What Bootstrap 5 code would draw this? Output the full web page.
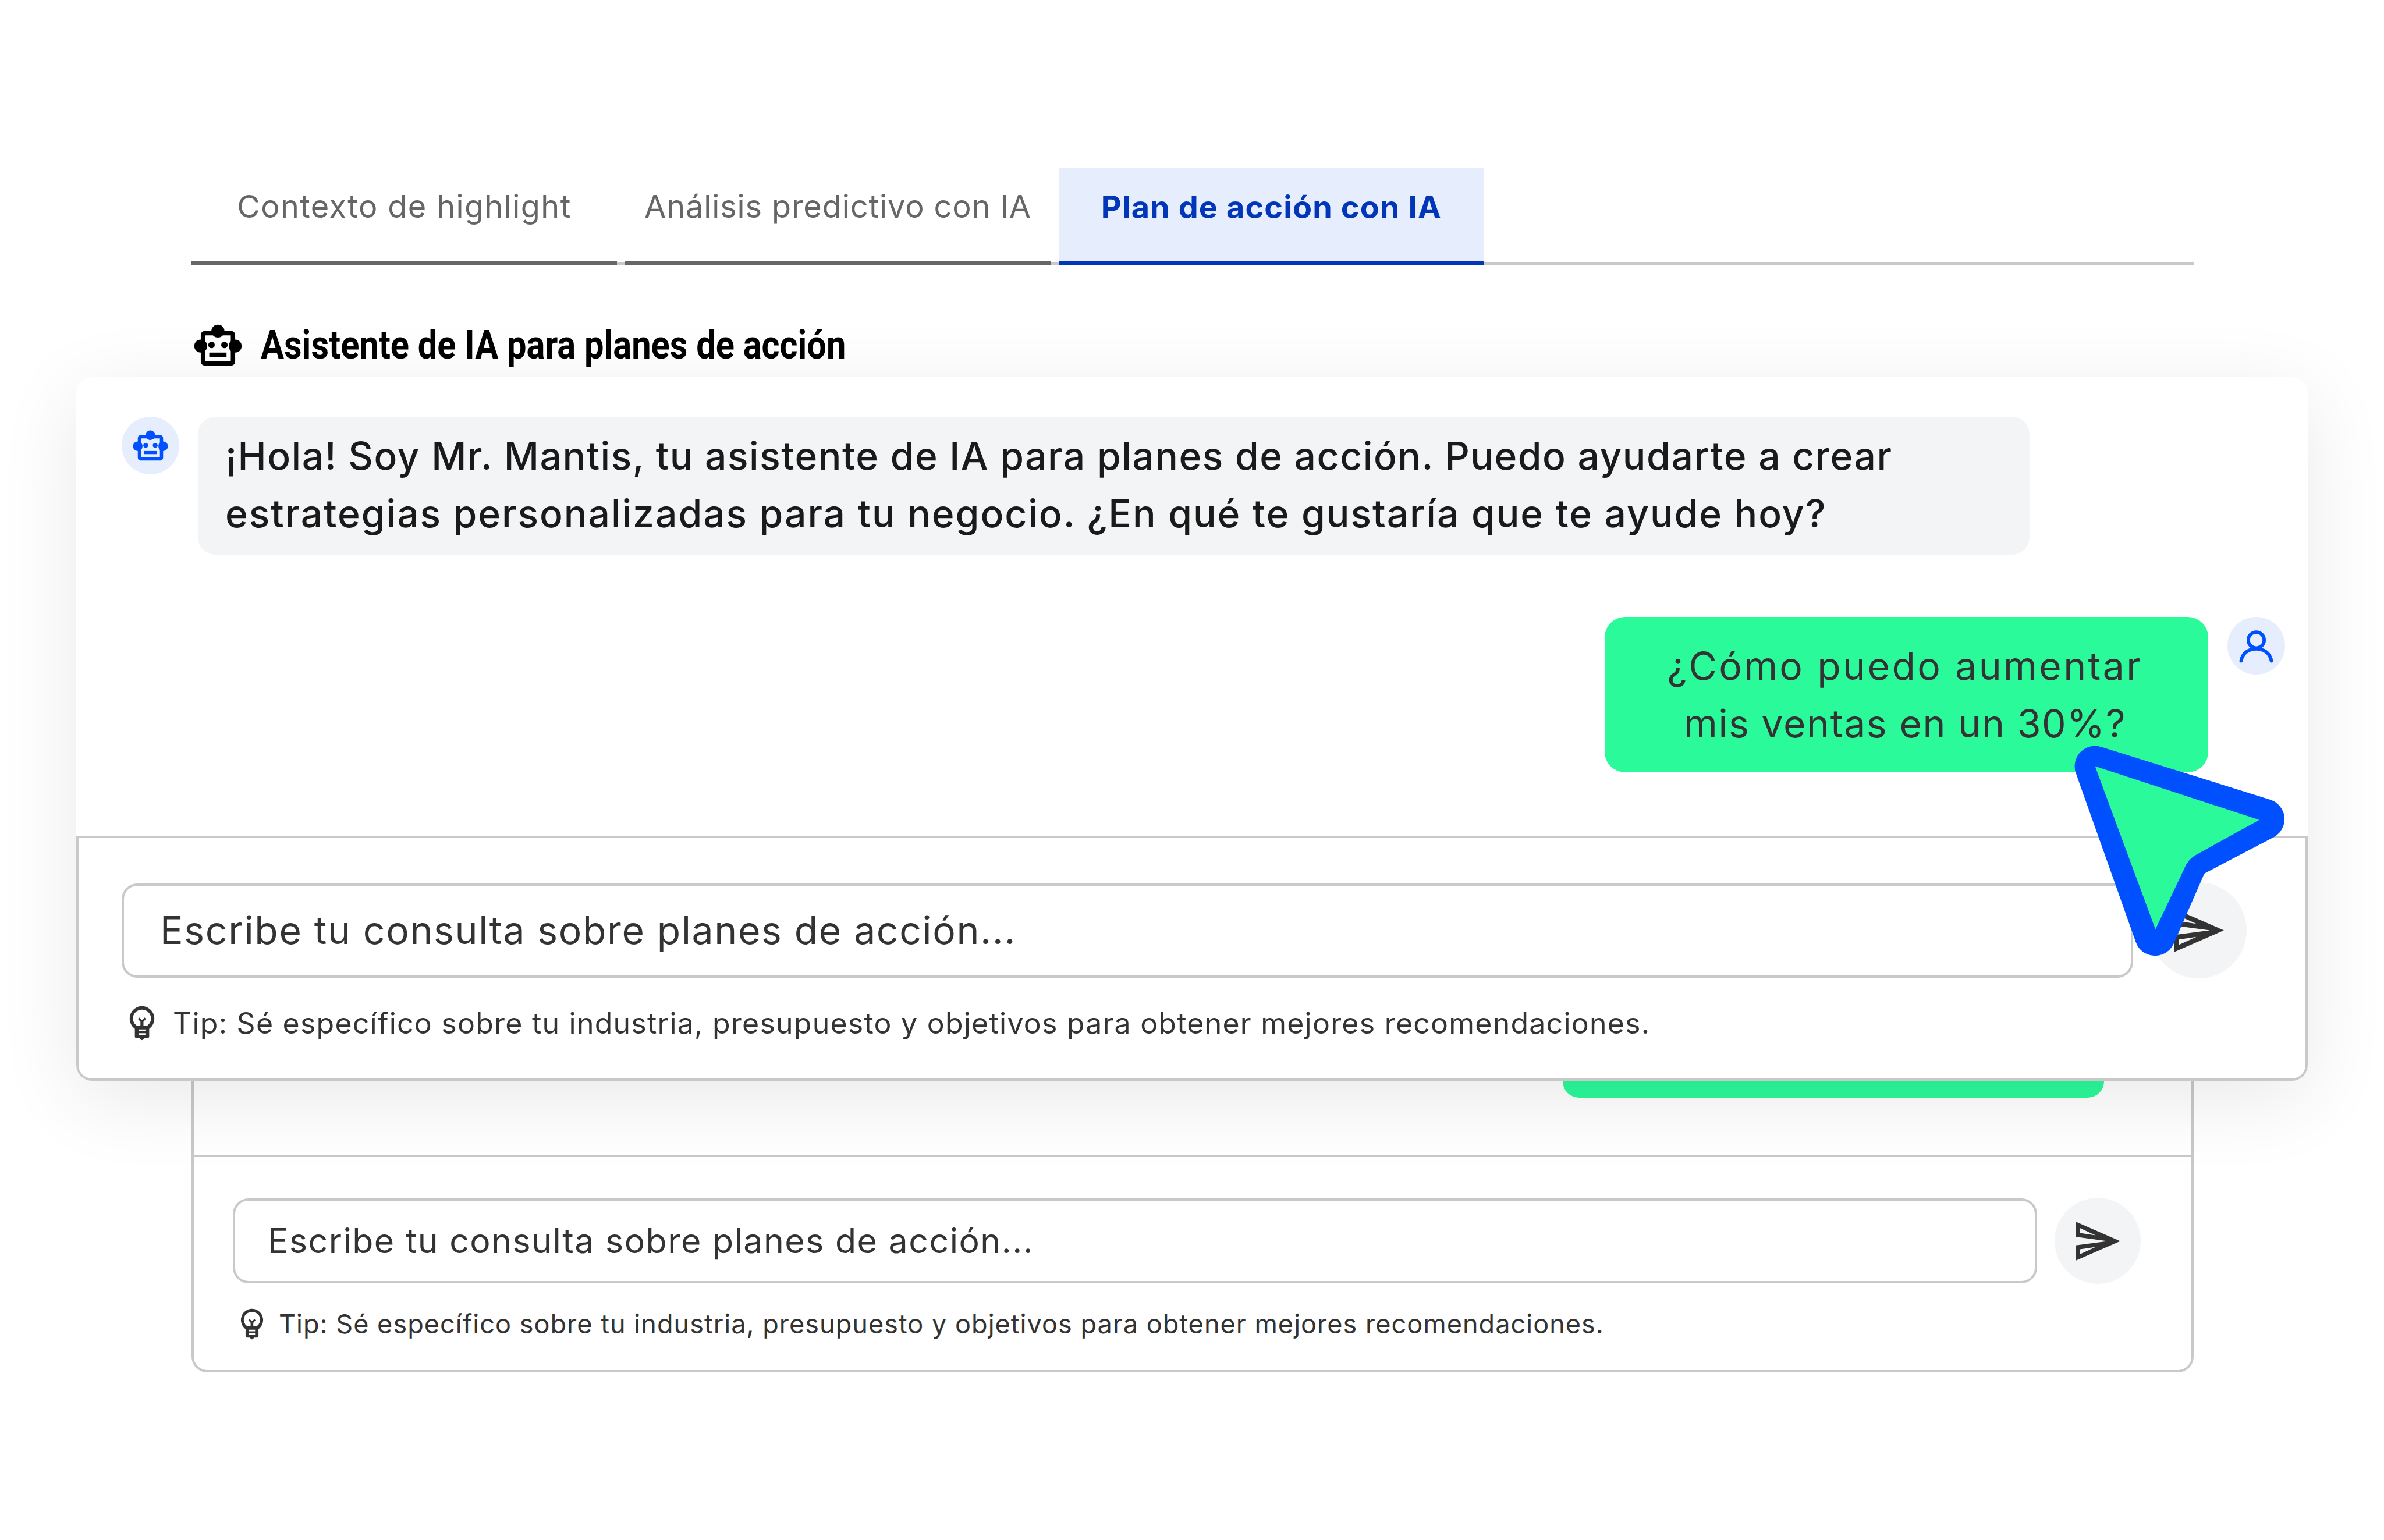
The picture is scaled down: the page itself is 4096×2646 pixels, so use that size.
<!DOCTYPE html>
<html lang="es">
<head>
<meta charset="utf-8">
<title>Asistente de IA</title>
<link href="https://cdn.jsdelivr.net/npm/bootstrap@5.3.0/dist/css/bootstrap.min.css" rel="stylesheet">
<style>
html,body{margin:0;background:#fff;}
body{font-family:Inter,"Open Sans",sans-serif;color:#333;}
.stage{position:relative;width:4096px;height:2646px;overflow:hidden;background:#fff;padding:288px 327px 0 329px;}
.tabrow{border-bottom:4px solid #c9c9c9;height:167px;gap:14px;flex-wrap:nowrap;}
.tabitem{width:731px;height:167px;border-bottom:6px solid #666;margin-bottom:-4px;color:#666;font-size:54px;letter-spacing:1.4px;padding:0 0 28px;background:transparent;border-radius:0;}
.tabitem.is-tight{letter-spacing:.9px;}
.tabitem.is-on{background:#e6edfd;color:#0036b7;font-weight:700;border-bottom-color:#0036b7;letter-spacing:1.1px;padding-bottom:26px;}
.heading-row{height:276px;gap:32px;padding-left:4px;color:#000;}
.robot-lg{width:83px;height:72px;flex:none;}
.heading-txt{font-family:Roboto,"Liberation Sans",sans-serif;font-weight:700;font-size:68px;margin:0;line-height:1;white-space:nowrap;transform:scaleX(.876);transform-origin:left center;}
.backcard{border:4px solid #c9c9c9;border-radius:27px;height:1627px;background:#fff;}
.back-chat{flex:1 1 auto;padding:0 150px 98px 0;}
.back-bubble{width:930px;height:300px;background:#2bfa9a;border-radius:28px;}
.back-foot{border-top:4px solid #c9c9c9;padding:70px 87px 0 67px;height:370px;}
.box{border:4px solid #c9c9c9;border-radius:27px;background:#fff;color:#333;}
.box-back{height:146px;padding:0 56px;font-size:59px;letter-spacing:1.5px;}
.box-front{height:162px;padding:0 62px;font-size:66px;letter-spacing:1.65px;}
.sendbtn{background:#f3f4f6;border:0;padding:0;flex:none;}
.sendbtn-back{width:148px;height:148px;margin-left:30px;}
.sendbtn-back svg{width:77px;height:67px;}
.sendbtn-front{width:165px;height:165px;margin-left:30px;}
.sendbtn-front svg{width:86px;height:75px;}
.tip-back{font-size:45px;letter-spacing:1.03px;margin-top:42px;gap:25px;padding-left:12px;line-height:1.2;}
.tip-back svg{width:42px;height:54px;}
.tip-front{font-size:50px;letter-spacing:1.23px;margin-top:47px;gap:30px;padding-left:12px;line-height:1.2;}
.tip-front svg{width:46px;height:60px;}
.overlay{position:absolute;left:131px;top:648px;width:3834px;height:1209px;background:#fff;border-radius:27px;box-shadow:0 30px 140px rgba(0,0,0,.09);}
.ov-chat{height:788px;padding:68px 39px 0 78px;}
.avatar{width:99px;height:99px;background:#e6edfd;flex:none;}
.avatar .bot{width:61px;height:53px;}
.avatar .usr{width:65px;height:65px;}
.bubble-ai{width:3147px;height:237px;background:#f3f4f6;border-radius:30px;margin-left:32px;padding:0 47px 3px;font-size:66px;line-height:99px;letter-spacing:1.5px;color:#1a1a1a;white-space:nowrap;font-weight:500;}
.ai-line2{letter-spacing:1.95px;}
.row-user{margin-top:107px;}
.bubble-me{width:1037px;height:267px;background:#2bfa9a;border-radius:35px;margin-right:33px;padding-right:5px;font-size:66px;line-height:99px;letter-spacing:1.6px;text-align:center;color:#333;}
.me-line1{letter-spacing:3.4px;}
.ov-foot{height:421px;border:4px solid #c9c9c9;border-radius:0 0 27px 27px;padding:76px 101px 0 74px;}
.cursor-mark{position:absolute;left:3499px;top:1231px;width:467px;height:454px;}
</style>
</head>
<body>
<svg width="0" height="0" class="position-absolute">
  <defs>
    <symbol id="robot" viewBox="70 80 385 335">
      <circle cx="262" cy="135" r="52"/><circle cx="125" cy="255" r="52"/><circle cx="400" cy="255" r="52"/>
      <path fill-rule="evenodd" d="M155 135H370a30 30 0 0 1 30 30V380a30 30 0 0 1-30 30H155a30 30 0 0 1-30-30V165a30 30 0 0 1 30-30ZM160 170V375H365V170Z"/>
      <circle cx="211" cy="246" r="26"/><circle cx="314" cy="246" r="26"/><rect x="193" y="307" width="138" height="34"/>
    </symbol>
    <symbol id="send" viewBox="0 0 118 103">
      <path fill-rule="evenodd" d="M0 0L118 51.5L0 103V62.5L85 51.5L0 40ZM11.5 17V30L53 36ZM11.5 86V73L53 67Z"/>
    </symbol>
    <symbol id="bulb" viewBox="70 80 205 280">
      <path fill-rule="evenodd" d="M172 84a100 100 0 0 1 58 181V325q0 15-15 15H190q-8 16-18 16t-18-16H130q-15 0-15-15V265A100 100 0 0 1 172 84ZM172 112a70 70 0 0 0-42 128H160V208L140 186L150 174L172 196L194 174L204 186L184 208V240H214A70 70 0 0 0 172 112ZM145 270V285H200V270ZM145 300V315H200V300Z"/>
    </symbol>
  </defs>
</svg>
<div class="stage">
  <ul class="nav tabrow">
    <li class="nav-item"><a class="nav-link tabitem d-flex align-items-center justify-content-center" href="#">Contexto de highlight</a></li>
    <li class="nav-item"><a class="nav-link tabitem is-tight d-flex align-items-center justify-content-center" href="#">Análisis predictivo con IA</a></li>
    <li class="nav-item"><a class="nav-link tabitem is-on d-flex align-items-center justify-content-center" href="#">Plan de acción con IA</a></li>
  </ul>
  <div class="heading-row d-flex align-items-center">
    <svg class="robot-lg" fill="#000"><use href="#robot"/></svg>
    <h5 class="heading-txt">Asistente de IA para planes de acción</h5>
  </div>
  <div class="backcard d-flex flex-column">
    <div class="back-chat d-flex justify-content-end align-items-end"><div class="back-bubble"></div></div>
    <div class="back-foot">
      <div class="d-flex align-items-center">
        <div class="box box-back flex-grow-1 d-flex align-items-center">Escribe tu consulta sobre planes de acción...</div>
        <button class="btn sendbtn sendbtn-back rounded-circle d-flex align-items-center justify-content-center" type="button" aria-label="Enviar"><svg fill="#333"><use href="#send"/></svg></button>
      </div>
      <div class="tip-back d-flex align-items-center"><svg fill="#333"><use href="#bulb"/></svg><span>Tip: Sé específico sobre tu industria, presupuesto y objetivos para obtener mejores recomendaciones.</span></div>
    </div>
  </div>

  <div class="overlay d-flex flex-column">
    <div class="ov-chat">
      <div class="d-flex">
        <div class="avatar rounded-circle d-flex align-items-center justify-content-center"><svg class="bot" fill="#0050ff"><use href="#robot"/></svg></div>
        <div class="bubble-ai d-flex align-items-center"><span>¡Hola! Soy Mr. Mantis, tu asistente de IA para planes de acción. Puedo ayudarte a crear<br><span class="ai-line2">estrategias personalizadas para tu negocio. ¿En qué te gustaría que te ayude hoy?</span></span></div>
      </div>
      <div class="d-flex justify-content-end row-user">
        <div class="bubble-me d-flex align-items-center justify-content-center"><span><span class="me-line1">¿Cómo puedo aumentar</span><br>mis ventas en un 30%?</span></div>
        <div class="avatar rounded-circle d-flex align-items-center justify-content-center">
          <svg class="usr" viewBox="0 0 100 100" fill="none" stroke="#0050ff" stroke-width="9" stroke-linecap="round"><circle cx="50" cy="35" r="21"/><path d="M10 90C14 68 32 58 50 58C68 58 86 68 90 90"/></svg>
        </div>
      </div>
    </div>
    <div class="ov-foot">
      <div class="d-flex align-items-center">
        <div class="box box-front flex-grow-1 d-flex align-items-center">Escribe tu consulta sobre planes de acción...</div>
        <button class="btn sendbtn sendbtn-front rounded-circle d-flex align-items-center justify-content-center" type="button" aria-label="Enviar"><svg fill="#333"><use href="#send"/></svg></button>
      </div>
      <div class="tip-front d-flex align-items-center"><svg fill="#333"><use href="#bulb"/></svg><span>Tip: Sé específico sobre tu industria, presupuesto y objetivos para obtener mejores recomendaciones.</span></div>
    </div>
  </div>

  <svg class="cursor-mark" viewBox="5400 1900 720 700">
    <path d="M5555 2032L6003 2172L5820 2268Q5800 2280 5791 2304L5714 2480Z" fill="#0050ff" stroke="#0050ff" stroke-width="108" stroke-linejoin="round"/>
    <path d="M5555 2032L5990 2174L5820 2268Q5800 2280 5791 2304L5715 2464Z" fill="#2bfa9a"/>
  </svg>
</div>
<script src="https://cdn.jsdelivr.net/npm/bootstrap@5.3.0/dist/js/bootstrap.bundle.min.js"></script>
</body>
</html>
